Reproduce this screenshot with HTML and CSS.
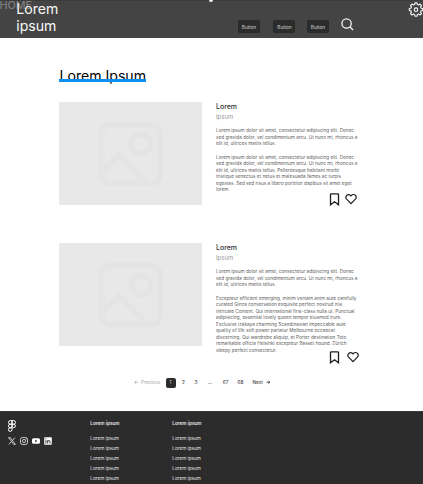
FILE: index.html
```html
<!DOCTYPE html>
<html lang="en">
<head>
<meta charset="utf-8">
<title>Lorem Ipsum</title>
<link rel="stylesheet" href="styles.css">
</head>
<body>
<svg class="defs" width="0" height="0">
  <symbol id="image" viewBox="0 0 24 24"><rect x="3" y="3" width="18" height="18" rx="2.6"/><circle cx="15.1" cy="8.900" r="3"/><path d="M3.3 17.300 8.300 12.300 16.800 20.800"/></symbol>
  <symbol id="bookmark" viewBox="0 0 10 13"><path d="M1 1.6Q1 .8 1.8 .8H8.2Q9 .8 9 1.6V11.8L5 8.8 1 11.8Z"/></symbol>
  <symbol id="heart" viewBox="0 0 24 22"><path d="M20.8 3.6a5.5 5.5 0 0 0-7.8 0L12 4.7l-1.1-1.1a5.5 5.5 0 0 0-7.7 7.8l1 1L12 20.2l7.8-7.8 1-1a5.5 5.5 0 0 0 0-7.8z"/></symbol>
</svg>
<header class="header">
  <span class="home">HOME</span>
  <span class="notch"></span>
  <h1 class="brand">Lorem<br>ipsum</h1>
  <nav class="nav">
    <button class="btn">Button</button>
    <button class="btn">Button</button>
    <button class="btn">Button</button>
    <svg class="search" viewBox="0 0 14 14"><circle cx="6" cy="6" r="5"/><path d="M9.7 9.7 13 13"/></svg>
  </nav>
  <svg class="gear" viewBox="0 1 24 24"><circle cx="12" cy="13.300" r="3"/><path d="M10.300 1.500h3.400l.7 3 2 .8 2.600-1.600 2.400 2.400-1.600 2.600.8 2 2.900.6v3.400l-2.900.7-.8 2 1.600 2.600-2.400 2.400-2.600-1.600-2 .8-.7 2.900h-3.400l-.7-2.900-2-.8L5 22.400 2.600 20l1.600-2.600-.8-2-2.900-.7v-3.400l2.900-.6.8-2L2.600 6.100 5 3.700l2.600 1.600 2-.8z"/></svg>
</header>
<main class="main">
  <h2 class="heading">Lorem Ipsum</h2>
  <article class="card">
    <div class="picture"><svg><use href="#image"/></svg></div>
    <div class="copy">
      <h3>Lorem</h3>
      <h4>Ipsum</h4>
      <p>Lorem ipsum dolor sit amet, consectetur adipiscing elit. Donec<br>sed gravida dolor, vel condimentum arcu. Ut nunc mi, rhoncus a<br>elit id, ultrices mattis tellus.</p>
      <p>Lorem ipsum dolor sit amet, consectetur adipiscing elit. Donec<br>sed gravida dolor, vel condimentum arcu. Ut nunc mi, rhoncus a<br>elit id, ultrices mattis tellus. Pellentesque habitant morbi<br>tristique senectus et netus et malesuada fames ac turpis<br>egestas. Sed sed risus a libero porttitor dapibus sit amet eget<br>lorem.</p>
      <div class="actions"><svg class="bookmark"><use href="#bookmark"/></svg><svg class="heart"><use href="#heart"/></svg></div>
    </div>
  </article>
  <article class="card">
    <div class="picture"><svg><use href="#image"/></svg></div>
    <div class="copy">
      <h3>Lorem</h3>
      <h4>Ipsum</h4>
      <p>Lorem ipsum dolor sit amet, consectetur adipiscing elit. Donec<br>sed gravida dolor, vel condimentum arcu. Ut nunc mi, rhoncus a<br>elit id, ultrices mattis tellus.</p>
      <p>Excepteur efficient emerging, minim veniam anim aute carefully<br>curated Ginza conversation exquisite perfect nostrud nisi<br>intricate Content. Qui  international first-class nulla ut. Punctual<br>adipisicing, essential lovely queen tempor eiusmod irure.<br>Exclusive izakaya charming Scandinavian impeccable aute<br>quality of life soft power pariatur Melbourne occaecat<br>discerning. Qui wardrobe aliquip, et Porter destination Toto<br>remarkable officia Helsinki excepteur Basset hound. Zürich<br>sleepy perfect consectetur.</p>
      <div class="actions wide"><svg class="bookmark"><use href="#bookmark"/></svg><svg class="heart"><use href="#heart"/></svg></div>
    </div>
  </article>
  <nav class="pages">
    <span class="previous"><svg class="arrow" viewBox="0 0 5 5"><path d="M4.500 2.500H.7M2.400.8.7 2.500 2.400 4.200"/></svg>Previous</span>
    <span class="page current">1</span>
    <span class="page">2</span>
    <span class="page">3</span>
    <span class="page dots">...</span>
    <span class="page far">67</span>
    <span class="page">68</span>
    <span class="next">Next<svg class="arrow" viewBox="0 0 5 5"><path d="M.5 2.500h3.800M2.600.8l1.700 1.700-1.700 1.700"/></svg></span>
  </nav>
</main>
<footer class="footer">
  <div class="about">
    <svg class="figma" viewBox="0 0 8 12"><path d="M4 .6H2.300a1.700 1.700 0 0 0 0 3.600H4zM4 .6h1.700a1.700 1.700 0 0 1 0 3.600H4zM4 4.200H2.300a1.700 1.700 0 0 0 0 3.600H4zM4 7.800H2.300A1.800 1.800 0 1 0 4 9.600z"/><circle cx="5.700" cy="6" r="1.700"/></svg>
    <div class="social">
      <svg viewBox="0 0 8 8"><path class="line" d="M.6.6H2.300L7.400 7.400H5.700ZM7 .6 4.500 3.500M3.500 4.500.8 7.400"/></svg>
      <svg viewBox="0 0 8 8"><rect class="line" x=".5" y=".5" width="7" height="7" rx="2"/><circle class="line" cx="4" cy="4" r="1.600"/><circle class="solid" cx="6.100" cy="1.900" r=".5"/></svg>
      <svg viewBox="0 0 8 8"><path class="solid" fill-rule="evenodd" d="M1.500 1.200h5Q8 1.200 8 2.700v2.600Q8 6.800 6.500 6.800h-5Q0 6.800 0 5.300V2.700Q0 1.200 1.500 1.200zM3.200 2.800v2.400L5.400 4z"/></svg>
      <svg viewBox="0 0 8 8"><rect class="solid" x=".2" y=".2" width="7.600" height="7.600" rx=".7"/><path class="cut" d="M1.900 3.200v3.400M1.900 1.400v1M3.700 6.600V3.200M3.700 4.600Q3.800 3.500 4.900 3.500 6 3.500 6 4.700v1.900"/></svg>
    </div>
  </div>
  <ul class="links"><li class="title">Lorem ipsum</li><li>Lorem ipsum</li><li>Lorem ipsum</li><li>Lorem ipsum</li><li>Lorem ipsum</li><li>Lorem ipsum</li></ul>
  <ul class="links"><li class="title">Lorem ipsum</li><li>Lorem ipsum</li><li>Lorem ipsum</li><li>Lorem ipsum</li><li>Lorem ipsum</li><li>Lorem ipsum</li></ul>
</footer>
</body>
</html>
```
FILE: styles.css
```css
* { box-sizing: border-box; }
body { margin: 0; height: 484px; overflow: hidden; display: flex; flex-direction: column; background: #fff; font-family: Inter, sans-serif; color: #1e1e1e; }
h1, h2, h3, h4, p, ul { margin: 0; padding: 0; font-weight: 400; }
svg { display: block; fill: none; }
.defs { position: absolute; }

.header { position: relative; height: 38px; flex: none; background: #444; display: flex; border-top: 1px solid #3c3c3c; }
.home { position: absolute; left: -.5px; top: -2px; font-size: 10.800px; line-height: 13px; color: #858585; }
.notch { position: absolute; left: 209px; top: -3px; width: 4px; height: 4px; border-radius: 50%; background: #fff; }
.brand { position: relative; margin-left: 16.300px; width: 221.700px; font-size: 14.100px; line-height: 17px; margin-top: -1.500px; color: #f8f8f8; }
.nav { display: flex; align-items: flex-start; padding-top: 19px; }
.btn { width: 22px; height: 13px; margin-right: 13.500px; padding: 0; border: 1px solid #292929; border-radius: 2px; background: #2c2c2c; color: #d3d3d3; font: 4.700px/10px Inter, sans-serif; }
.btn + .btn { margin-right: 11.500px; }
.search { width: 13px; height: 13px; margin: -2px 0 0 .7px; stroke: #f3f3f3; stroke-width: 1.400; }
.gear { position: absolute; left: 409.300px; top: 1px; width: 14px; height: 15px; stroke: #f3f3f3; stroke-width: 2; stroke-linejoin: round; overflow: visible; }

.main { height: 373px; flex: none; padding: 29px 0 0 59px; }
.heading { position: relative; width: 87px; height: 14px; line-height: 17px; font-size: 14.100px; text-indent: .5px; white-space: nowrap; color: #000; }
.heading::after { content: ""; position: absolute; left: 0; top: 12px; width: 87px; height: 2.500px; background: #0d90f5; }
.card { display: flex; height: 104px; margin-top: 21px; }
.card + .card { margin-top: 37px; }
.picture { width: 143px; height: 103px; background: #e8e8e8; display: flex; align-items: center; justify-content: center; }
.picture svg { width: 78px; height: 78px; stroke: #e4e4e4; stroke-width: 1.800; stroke-linejoin: round; }
.copy { margin-left: 14px; width: 143px; white-space: nowrap; }
.copy h3 { font-size: 7px; line-height: 9px; font-weight: 500; color: #333; }
.copy h4 { font-size: 6px; line-height: 10px; padding-top: 1px; color: #999; }
.copy p { margin-top: 5px; font-size: 4.700px; line-height: 6.530px; color: #606060; }
.copy p + p { margin-top: 7.100px; }
.actions { display: flex; gap: 4.500px; margin: .5px 0 0 113px; }
.actions.wide { gap: 7px; margin-top: -2.100px; }
.actions svg { stroke: #1e1e1e; flex: none; }
.bookmark { width: 11px; height: 13px; stroke-width: 1.300; }
.heart { width: 12px; height: 12px; stroke-width: 2.400; }

.pages { display: flex; align-items: center; margin: 31px 0 0 75px; height: 9px; font-size: 4.700px; line-height: 9px; white-space: nowrap; }
.previous, .next { display: flex; align-items: center; }
.previous { width: 31.500px; gap: 2.500px; color: #aaa; }
.arrow { width: 4.500px; height: 4.500px; stroke: currentColor; stroke-width: .8; }
.page { width: 9px; height: 9px; margin-right: 3.500px; text-align: center; }
.current { width: 10px; height: 10px; line-height: 9px; border-radius: 2px; background: #2c2c2c; color: #ddd; }
.dots { margin-right: 6.500px; margin-left: 1.500px; font-weight: 700; }
.far { margin-right: 6px; }
.next { margin-left: 4px; gap: 3px; }

.footer { flex: 1; display: flex; background: #2c2c2c; color: #e6e6e6; border-top: 1px solid #393939; }
.about { width: 90.300px; padding: 7.500px 0 0 8px; }
.figma { width: 8px; height: 12px; stroke: #fff; stroke-width: 1; }
.social { display: flex; gap: 4px; margin-top: 5.500px; }
.social svg { width: 8px; height: 8px; }
.line { stroke: #eee; stroke-width: .8; }
.solid { fill: #fff; }
.cut { stroke: #2c2c2c; stroke-width: .9; }
.links { list-style: none; width: 82px; padding-top: 6.400px; font-size: 4.700px; line-height: 10px; white-space: nowrap; }
.title { font-weight: 600; margin-bottom: 4.600px; }
```
